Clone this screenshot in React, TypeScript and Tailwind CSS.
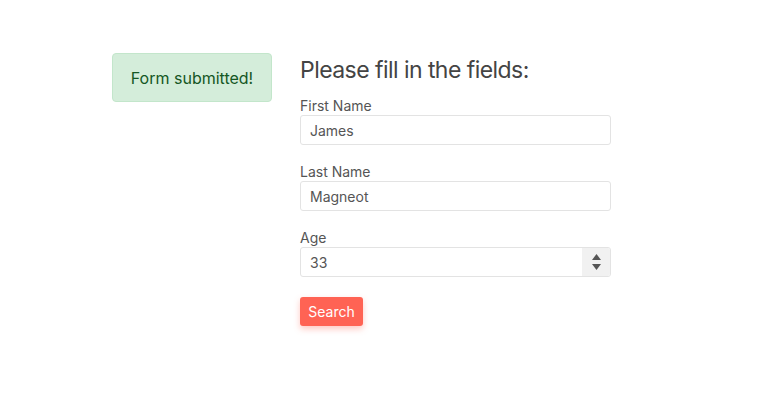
import React from "react";

function Field({ label, value, spinner }: { label: string; value: string; spinner?: boolean }) {
  return (
    <div className="mb-[18px]">
      <label className="block text-[14px] leading-[18px] text-[#555]">{label}</label>
      <div className="flex h-[30px] w-[311px] rounded-[3px] border border-[#e3e3e3] bg-white overflow-hidden">
        <input
          readOnly
          value={value}
          className="min-w-0 flex-1 bg-transparent pl-[9px] text-[14px] text-[#555] outline-none"
          style={{ fontFamily: "Inter, 'Liberation Sans', sans-serif" }}
        />
        {spinner && (
          <div className="flex w-[28px] flex-col items-center justify-center gap-[4px] bg-[#f1f1f1]">
            <svg width="9" height="6" viewBox="0 0 9 6"><path d="M4.5 0L9 6H0z" fill="#555" /></svg>
            <svg width="9" height="6" viewBox="0 0 9 6"><path d="M0 0h9L4.5 6z" fill="#555" /></svg>
          </div>
        )}
      </div>
    </div>
  );
}

export default function App() {
  return (
    <div
      className="h-[414px] w-[770px] bg-white"
      style={{ fontFamily: "Inter, 'Liberation Sans', sans-serif" }}
    >
      <div className="flex gap-[28px] pl-[112px] pt-[53px]">
        <div className="flex h-[49px] w-[160px] items-center justify-center rounded-[4px] border border-[#c3e6cb] bg-[#d4edda] text-[16px] text-[#155724]">
          Form submitted!
        </div>
        <div className="mt-[3px]">
          <h1 className="mb-[12px] text-[23px] leading-[29px] tracking-[-0.55px] text-[#444]">Please fill in the fields:</h1>
          <Field label="First Name" value="James" />
          <Field label="Last Name" value="Magneot" />
          <Field label="Age" value="33" spinner />
          <button className="mt-[2px] h-[29px] w-[63px] rounded-[3px] bg-[#ff6354] text-[14px] text-white shadow-[0_3px_6px_rgba(255,99,84,0.35)]">
            Search
          </button>
        </div>
      </div>
    </div>
  );
}
